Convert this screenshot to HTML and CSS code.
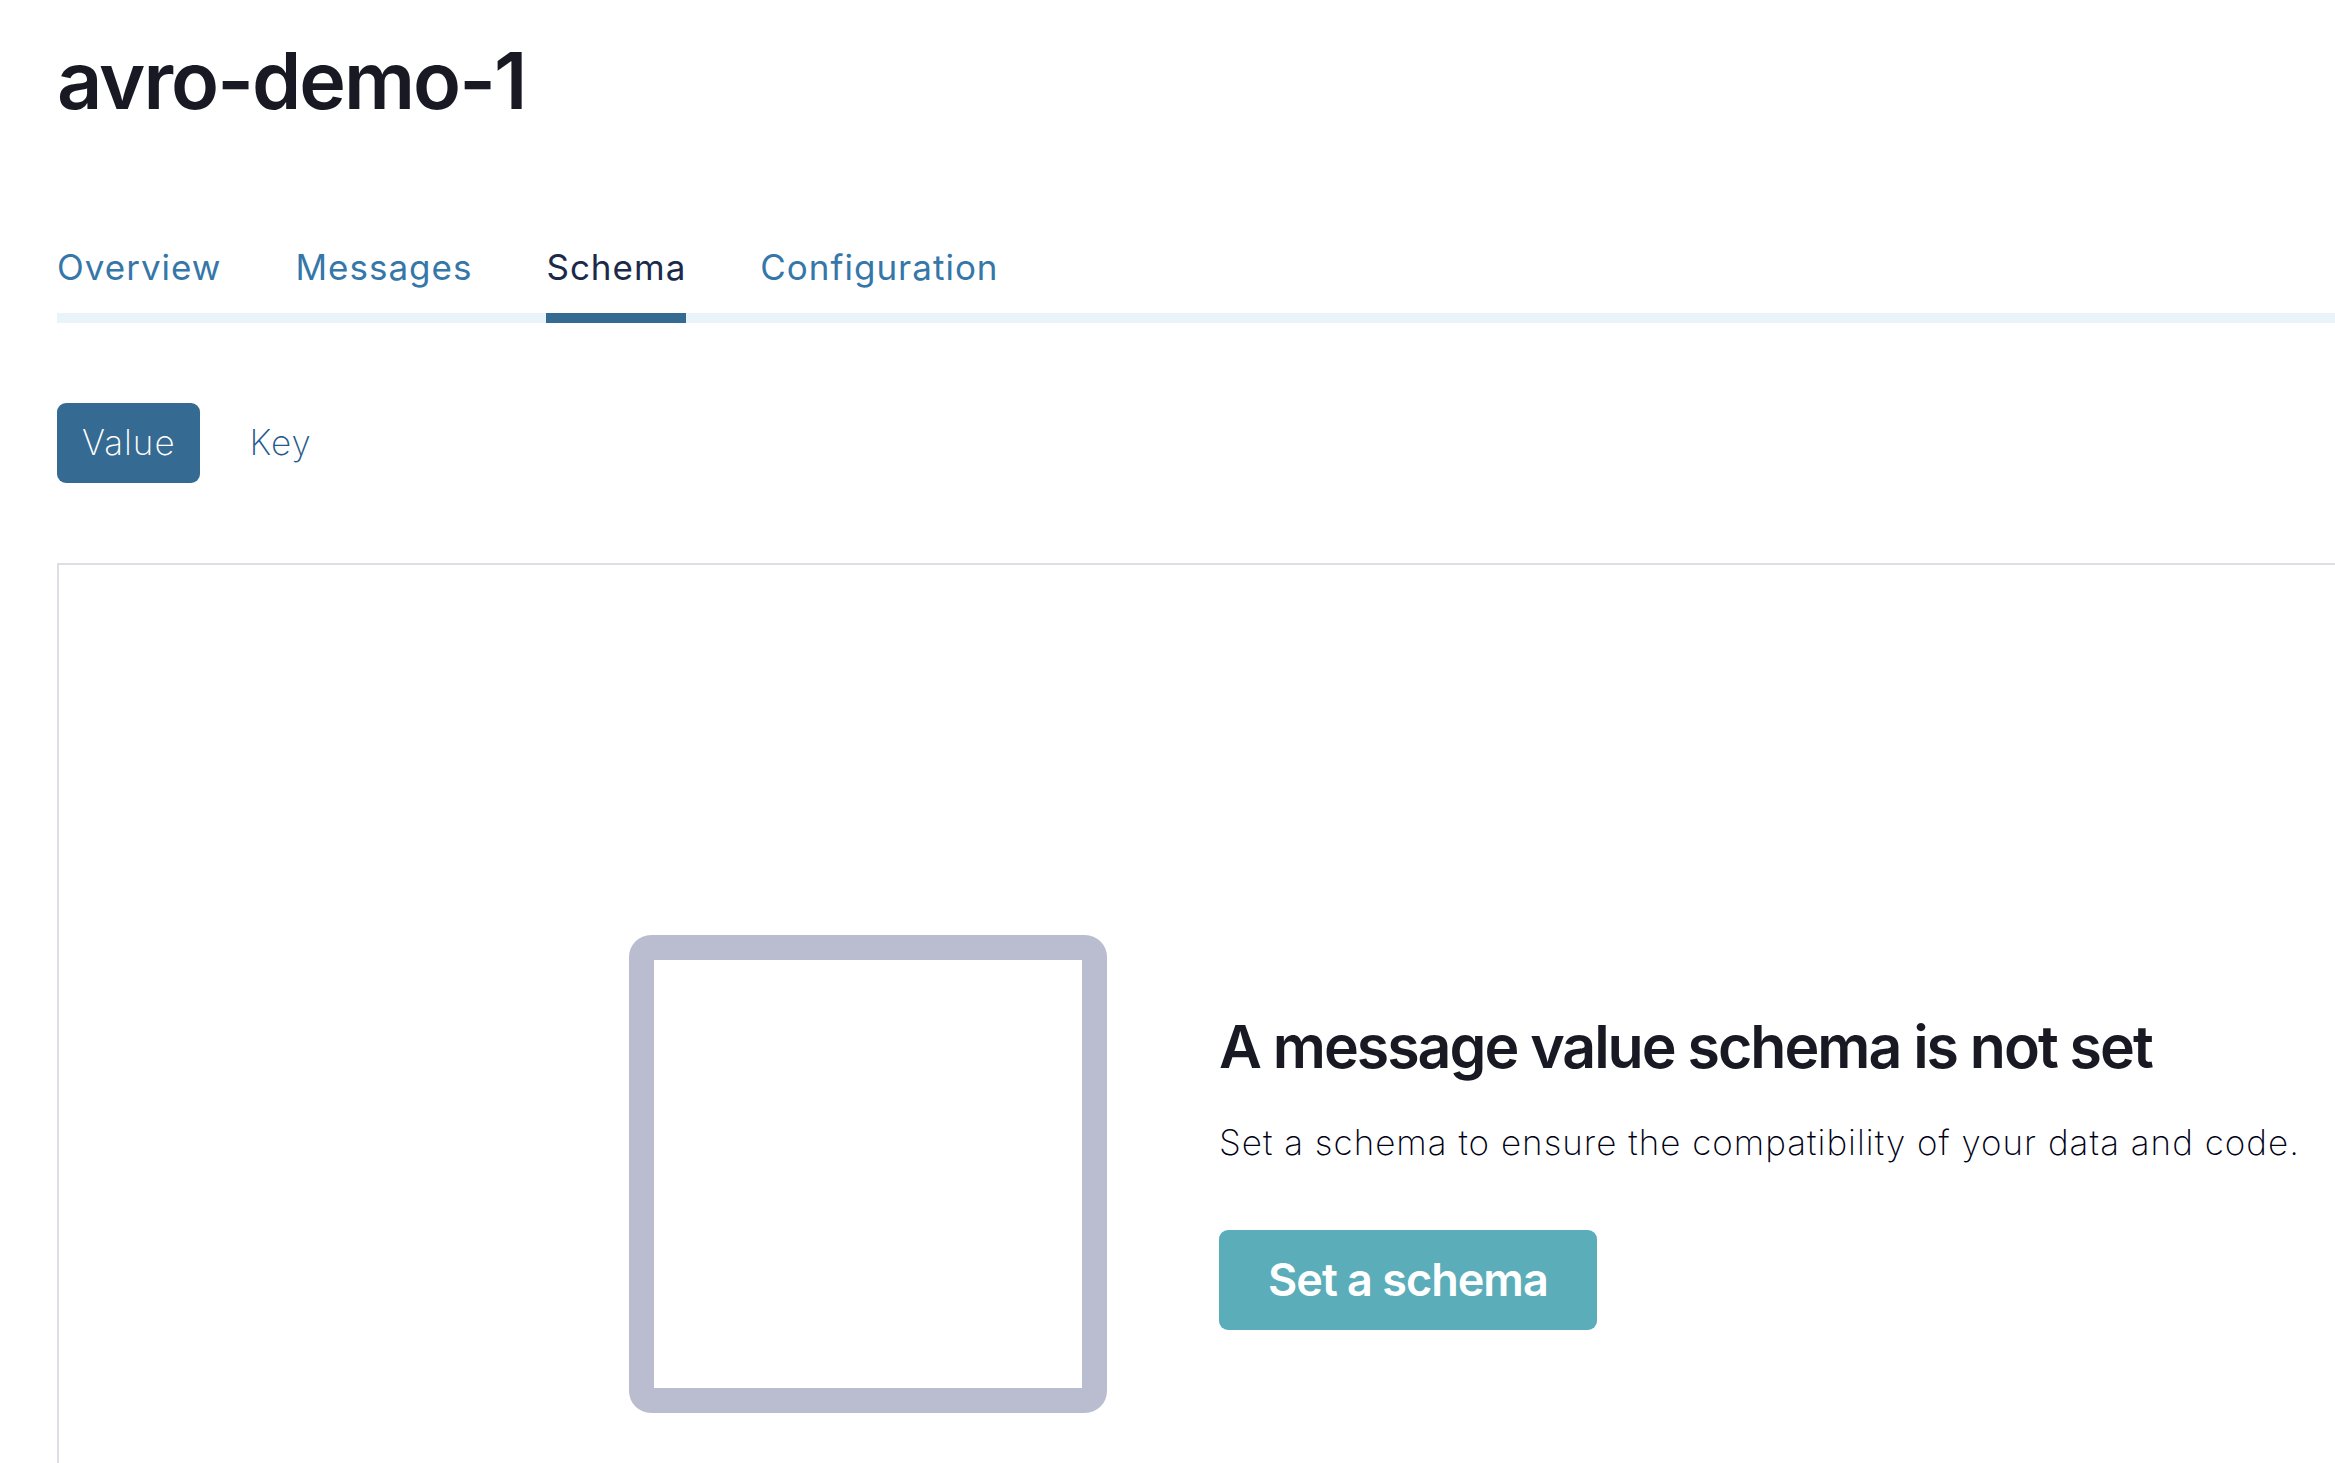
FILE: index.html
```html
<!DOCTYPE html>
<html lang="en">
<head>
<meta charset="utf-8">
<title>avro-demo-1</title>
<link rel="stylesheet" href="styles.css">
</head>
<body>
<main class="page">
  <h1 class="title">avro-demo-1</h1>
  <nav class="tabs">
    <a class="tab" href="#overview">Overview</a>
    <a class="tab" href="#messages">Messages</a>
    <a class="tab tab-active" href="#schema" aria-current="page">Schema</a>
    <a class="tab" href="#configuration">Configuration</a>
  </nav>
  <div class="switch">
    <button class="pill pill-active" type="button">Value</button>
    <button class="pill" type="button">Key</button>
  </div>
  <section class="panel">
    <svg class="art" viewBox="0 0 478 478" aria-hidden="true"><rect x="12.5" y="12.5" width="453" height="453" fill="none" stroke="#babdcf" stroke-width="25"/></svg>
    <div class="message">
      <h2 class="heading">A message value schema is not set</h2>
      <p class="text">Set a schema to ensure the compatibility of your data and code.</p>
      <button class="action" type="button">Set a schema</button>
    </div>
  </section>
</main>
</body>
</html>
```
FILE: styles.css
```css
* { box-sizing: border-box; }
body {
  margin: 0;
  background: #fff;
  color: #191924;
  font-family: Inter, "Liberation Sans", sans-serif;
}
h1, h2, p { margin: 0; }
button { border: 0; font-family: inherit; }
.page {
  display: flex;
  flex-direction: column;
  min-height: 100vh;
  padding: 32px 0 0 57px;
}
.title {
  font-size: 79px;
  line-height: 96px;
  font-weight: 600;
  letter-spacing: -2px;
}
.tabs {
  display: flex;
  gap: 74px;
  margin-top: 116px;
  box-shadow: inset 0 -10px #e8f4fa;
}
.tab {
  padding-bottom: 23px;
  border-bottom: 10px solid transparent;
  color: #3677a9;
  font-size: 35px;
  line-height: 46px;
  font-weight: 400;
  letter-spacing: 1px;
  text-decoration: none;
}
.tab-active { color: #1b2a4b; border-color: #356a92; }
.switch { display: flex; gap: 25px; margin-top: 80px; }
.pill {
  padding: 16px 24px 18px 25px;
  border-radius: 9px;
  background: transparent;
  color: #24598a;
  font-size: 35px;
  line-height: 46px;
  font-weight: 200;
  letter-spacing: 1px;
}
.pill-active { background: #356a92; color: #fff; }
.panel {
  display: flex;
  flex: 1;
  align-items: flex-start;
  gap: 112px;
  margin-top: 80px;
  padding: 370px 0 0 570px;
  border: solid #dedfe6;
  border-width: 2px 0 0 2px;
}
.art { flex: none; width: 478px; height: 478px; border-radius: 22px; }
.message { flex: none; padding-top: 76px; }
.heading {
  font-size: 59px;
  line-height: 72px;
  font-weight: 600;
  letter-spacing: -2px;
}
.text {
  margin-top: 36px;
  color: #000014;
  font-size: 35px;
  line-height: 46px;
  font-weight: 200;
  letter-spacing: 1px;
}
.action {
  margin-top: 65px;
  padding: 26px 49px;
  border-radius: 9px;
  background: #5aadb9;
  color: #fff;
  font-size: 45px;
  line-height: 48px;
  font-weight: 600;
  letter-spacing: -1px;
}
```
